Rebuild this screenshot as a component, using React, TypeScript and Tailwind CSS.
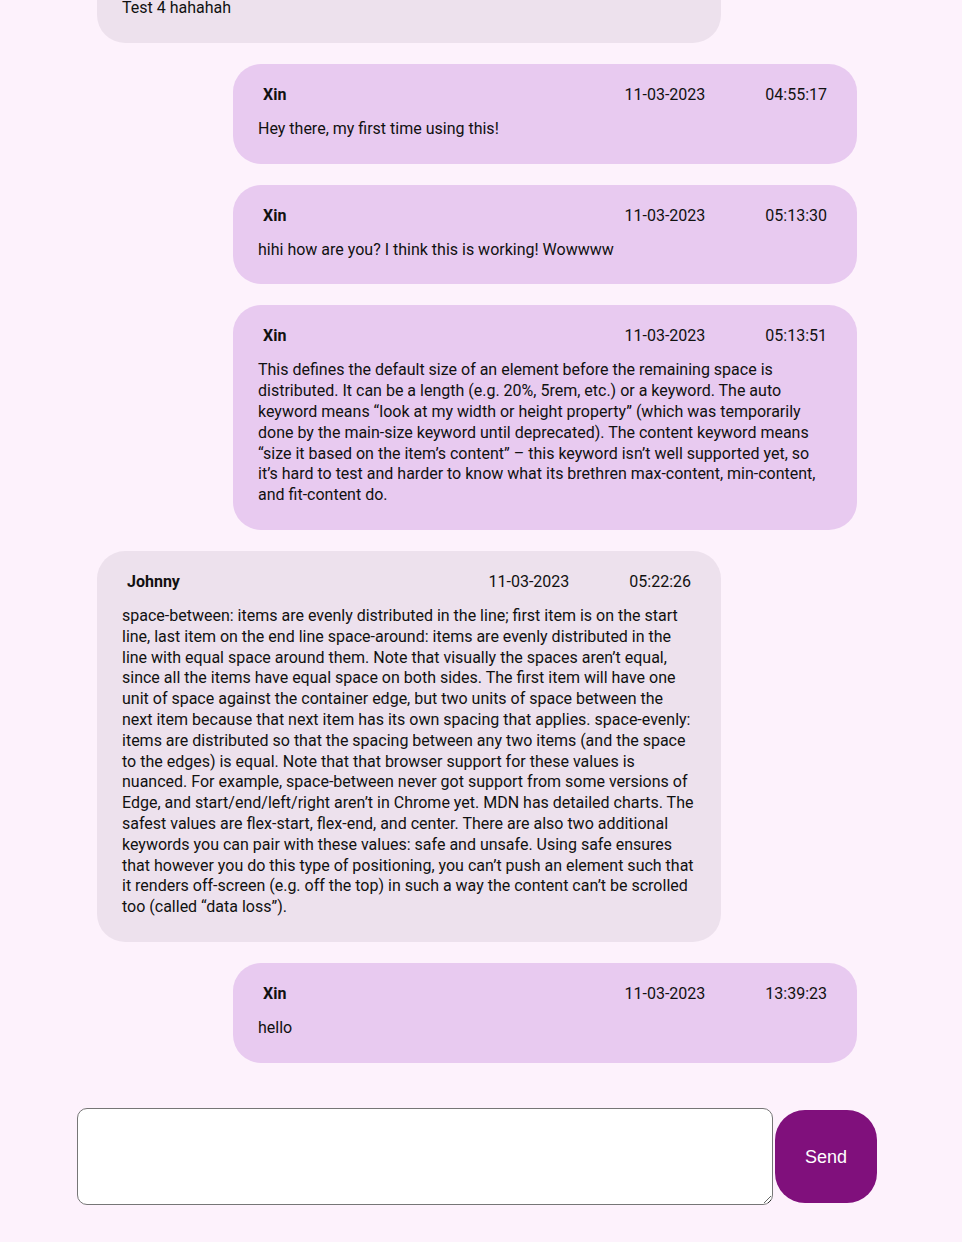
import React from "react";

type Msg = { user: string; date: string; time: string; text: string; mine: boolean };

const messages: Msg[] = [
  { user: "Johnny", date: "11-03-2023", time: "04:40:02", text: "Test 4 hahahah", mine: false },
  { user: "Xin", date: "11-03-2023", time: "04:55:17", text: "Hey there, my first time using this!", mine: true },
  { user: "Xin", date: "11-03-2023", time: "05:13:30", text: "hihi how are you? I think this is working! Wowwww", mine: true },
  {
    user: "Xin",
    date: "11-03-2023",
    time: "05:13:51",
    text: "This defines the default size of an element before the remaining space is distributed. It can be a length (e.g. 20%, 5rem, etc.) or a keyword. The auto keyword means \u201clook at my width or height property\u201d (which was temporarily done by the main-size keyword until deprecated). The content keyword means \u201csize it based on the item\u2019s content\u201d \u2013 this keyword isn\u2019t well supported yet, so it\u2019s hard to test and harder to know what its brethren max-content, min-content, and fit-content do.",
    mine: true,
  },
  {
    user: "Johnny",
    date: "11-03-2023",
    time: "05:22:26",
    text: "space-between: items are evenly distributed in the line; first item is on the start line, last item on the end line space-around: items are evenly distributed in the line with equal space around them. Note that visually the spaces aren\u2019t equal, since all the items have equal space on both sides. The first item will have one unit of space against the container edge, but two units of space between the next item because that next item has its own spacing that applies. space-evenly: items are distributed so that the spacing between any two items (and the space to the edges) is equal. Note that that browser support for these values is nuanced. For example, space-between never got support from some versions of Edge, and start/end/left/right aren\u2019t in Chrome yet. MDN has detailed charts. The safest values are flex-start, flex-end, and center. There are also two additional keywords you can pair with these values: safe and unsafe. Using safe ensures that however you do this type of positioning, you can\u2019t push an element such that it renders off-screen (e.g. off the top) in such a way the content can\u2019t be scrolled too (called \u201cdata loss\u201d).",
    mine: false,
  },
  { user: "Xin", date: "11-03-2023", time: "13:39:23", text: "hello", mine: true },
];

function Bubble({ m, first }: { m: Msg; first: boolean }) {
  return (
    <div
      className={`w-[624px] rounded-[28px] pt-[20px] pb-[24px] px-[25px] ${
        m.mine ? "self-end bg-[#e8caf0]" : "self-start bg-[#ede1ed]"
      } ${first ? "mt-[-57px]" : ""}`}
    >
      <div className="flex items-center px-[5px] leading-[21px]">
        <span className="flex-1 font-bold">{m.user}</span>
        <span>{m.date}</span>
        <span className="ml-[60px]">{m.time}</span>
      </div>
      <p className="mt-[14px] leading-[20.8px]">{m.text}</p>
    </div>
  );
}

export default function App() {
  return (
    <div
      className="min-h-screen bg-[#fdf2fc] text-[16px] text-[#111]"
      style={{ fontFamily: "Roboto, 'Noto Sans', sans-serif" }}
    >
      <div className="ml-[77px] w-[800px] overflow-hidden">
        <div className="flex flex-col gap-[21px] px-[20px]">
          {messages.map((m, i) => (
            <Bubble key={i} m={m} first={i === 0} />
          ))}
        </div>
        <div className="mt-[45px] pb-[37px] flex items-center gap-[2px]">
          <textarea className="w-[696px] h-[97px] bg-white border border-[#767676] rounded-[10px] outline-none" />
          <button
            className="w-[102px] h-[93px] rounded-[30px] bg-[#80107c] text-white text-[18px] pt-[2px]"
            style={{ fontFamily: "'Liberation Sans', Arial, sans-serif" }}
          >
            Send
          </button>
        </div>
      </div>
    </div>
  );
}
